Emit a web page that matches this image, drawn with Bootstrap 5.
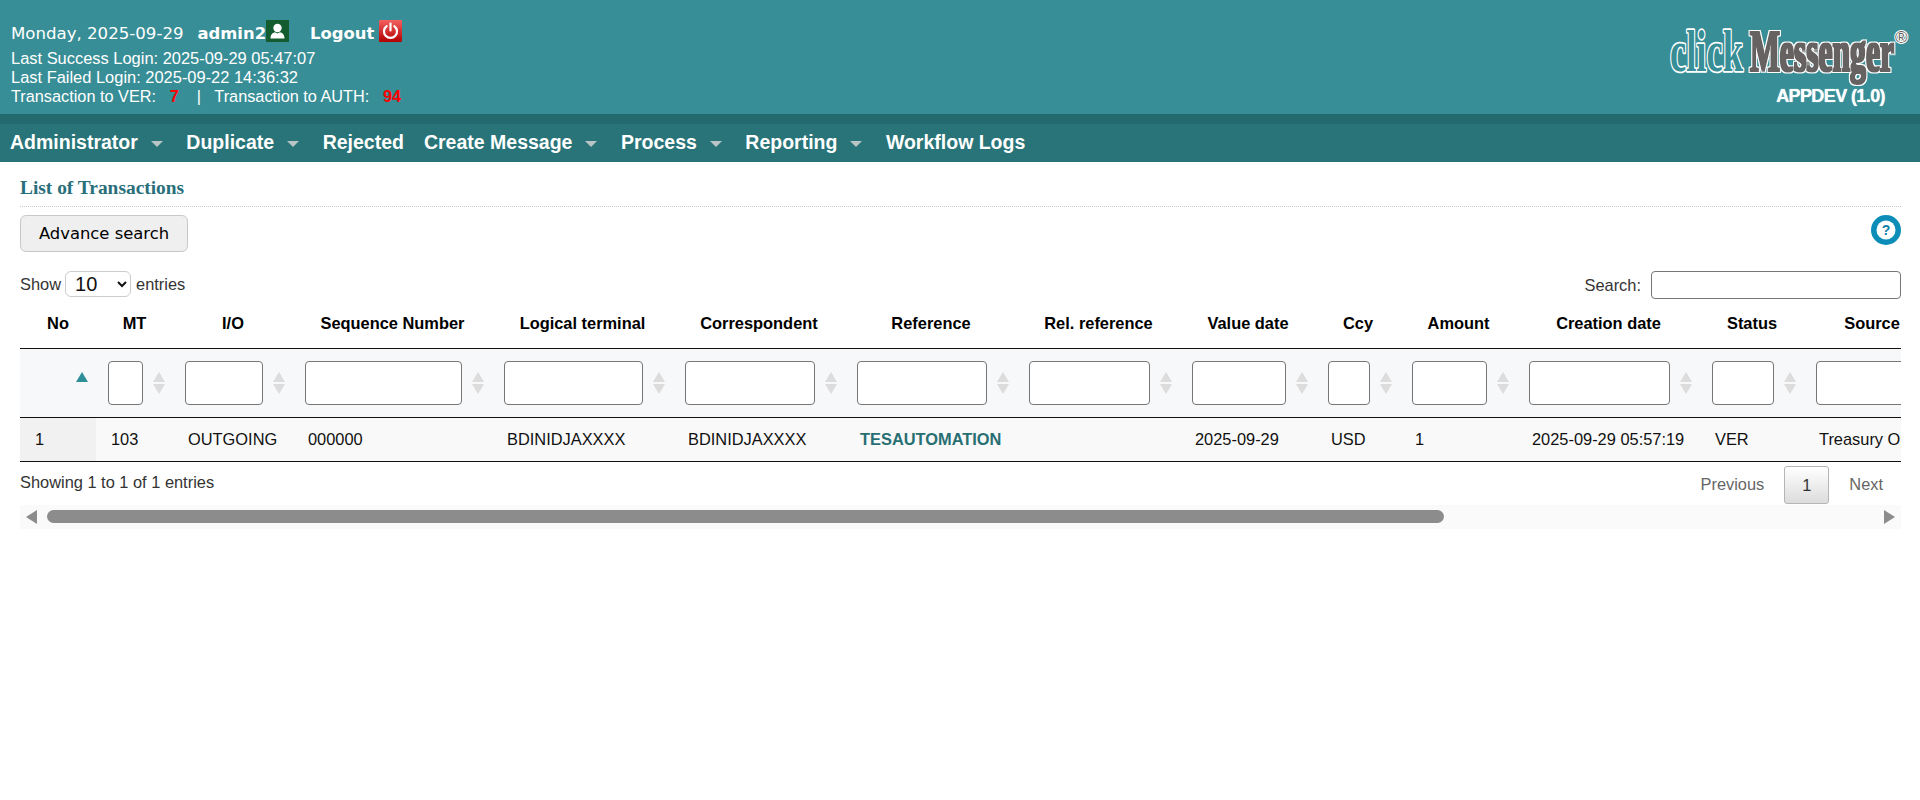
<!DOCTYPE html>
<html lang="en">
<head>
    <meta charset="UTF-8">
    <meta name="viewport" content="width=device-width, initial-scale=1.0">
    <title>clickMessenger - List of Transactions</title>
    <link href="https://cdn.jsdelivr.net/npm/bootstrap@5.3.0/dist/css/bootstrap.min.css" rel="stylesheet">
    <style>
        body { font-family: "Liberation Sans", Arial, sans-serif; font-size: 16.4px; color: #333; background: #fff; }

        /* header */
        .top-head { height: 114px; background: #388e96; color: #fff; padding: 20px 10px 0 11px; }
        .top-user { height: 22px; font-family: "DejaVu Sans", sans-serif; font-size: 16.6px; line-height: 26px; margin-bottom: 7px; }
        .top-user span, .top-user b { padding-top: 5px; }
        .top-user b { font-size: 16.4px; }
        .top-date { margin-right: 14px; }
        .top-user .top-logout { margin-left: 21px; margin-right: 5px; }
        .top-icon { width: 23px; height: 22px; display: block; }
        .top-info { font-size: 16.45px; line-height: 19px; }
        .top-count-row { font-size: 16.3px; }
        .top-count { color: #f00; font-weight: 700; }
        .logo-wrap { width: 250px; }
        .logo-svg { display: block; width: 250px; height: 66px; margin-top: 4px; }
        .logo-env { font-size: 18px; font-weight: 700; letter-spacing: -.6px; line-height: 20px; text-align: right; padding-right: 25px; margin-top: -4px; text-shadow: 0 0 1px #dff; }

        /* menu */
        .menu-stripe { height: 10px; background: #236a6e; }
        .menu-bar { height: 38px; background: #287478; padding-left: 10px; }
        .menu-item { color: #fff; font-size: 19.5px; font-weight: 700; text-decoration: none; line-height: 34px; padding-bottom: 2px; white-space: nowrap; }
        .menu-caret { width: 0; height: 0; border-left: 6px solid transparent; border-right: 6px solid transparent; border-top: 6px solid #b9c4c6; margin-left: 13px; margin-right: 3.5px; margin-top: 2px; }
        .menu-gap { width: 20px; }

        /* page */
        .page-body { padding: 0 19px 0 20px; }
        .page-title { font-family: "Liberation Serif", serif; font-size: 19.4px; font-weight: 700; color: #286f7b; margin: 0; height: 45px; line-height: 51px; border-bottom: 1px dotted #ccc; }
        .tool-row { padding-top: 8px; height: 64px; }
        .adv-btn { width: 168px; height: 37px; padding: 2px 0 0; background: #efefef; border: 1px solid #c8c8c8; border-radius: 6px; font-family: "DejaVu Sans", sans-serif; font-size: 16.4px; color: #000; }
        .help-icon { width: 30px; height: 30px; display: block; }
        .dt-top { height: 28px; margin-bottom: 0; }
        .dt-select { width: 66px; height: 26px; margin: 0 5px 0 4px; padding: 0 0 0 5px; font-size: 20px; line-height: 24px; color: #111; background: #fff; border: 1px solid #ccc; border-radius: 6px; font-family: "Liberation Sans", sans-serif; }
        .dt-search { width: 250px; height: 28px; margin-left: 10px; border: 1px solid #767676; border-radius: 4px; background: #fff; }

        /* table */
        .dt-wrap { overflow: hidden; }
        .dt-table { table-layout: fixed; width: 1920px; margin: 0; border-collapse: collapse; color: #000; }
        .dt-table thead tr.head-row th { height: 49px; font-size: 16.4px; font-weight: 700; text-align: center; vertical-align: middle; padding: 0; border: 0; border-bottom: 1px solid #111; background: #fff; white-space: nowrap; }
        .dt-table thead tr.filter-row th { height: 69px; padding: 12px 8px 12px 12px; border: 0; border-bottom: 1px solid #111; background: #f7f8fa; }
        .filter-input { flex: 1 1 auto; width: 10px; min-width: 0; height: 44px; padding: 0 4px; border: 1px solid #767676; border-radius: 4px; background: #fff; }
        .sort-icon { flex: none; width: 12px; height: 22px; margin-left: 10px; display: block; }
        .dt-table tbody td { height: 44px; padding: 0 0 0 15px; font-size: 16.4px; color: #111; vertical-align: middle; background: #f9f9f9; border: 0; border-bottom: 1px solid #111; white-space: nowrap; }
        .dt-table tbody td.no-cell { background: #f1f1f1; }
        .ref-link { color: #286f73; font-weight: 700; text-decoration: none; }

        /* footer */
        .dt-foot { height: 43px; }
        .dt-pager { padding-top: 4px; margin-right: 18px; }
        .pager-link { color: #666; text-decoration: none; line-height: 37px; }
        .pager-cur { width: 45px; height: 38px; margin: 0 20px; text-align: center; color: #333; line-height: 36px; border: 1px solid #b5b5b5; border-radius: 3px; background: linear-gradient(#fff, #dcdcdc); }
        .fake-scroll { height: 24px; background: #fafafa; padding: 0 6px; }
        .fake-scroll svg { width: 11px; height: 14px; flex: none; }
        .fake-track { flex: 1 1 auto; padding: 0 10px; }
        .fake-thumb { width: 1397px; height: 13px; border-radius: 7px; background: #8c8c8c; }
    </style>
</head>
<body>
    <!-- Header -->
    <div class="top-head d-flex justify-content-between">
        <div>
            <div class="top-user d-flex align-items-center">
                <span class="top-date">Monday, 2025-09-29</span>
                <b>admin2</b>
                <svg class="top-icon" viewBox="0 0 23 22"><rect width="23" height="22" fill="#125c30"/><circle cx="11.500" cy="8" r="4.200" fill="#fff"/><path d="M4.500 18.500c0-4.500 3-6 4.500-6.200l2.500 1.200 2.500-1.200c1.500.2 4.500 1.700 4.500 6.200z" fill="#fff"/></svg>
                <b class="top-logout">Logout</b>
                <svg class="top-icon" viewBox="0 0 23 22"><defs><linearGradient id="pw" x1="0" y1="0" x2="0" y2="1"><stop offset="0" stop-color="#f46060"/><stop offset="1" stop-color="#b30000"/></linearGradient></defs><rect width="23" height="22" rx="1" fill="url(#pw)"/><path d="M7.700 6.200a6.500 6.500 0 1 0 7.600 0" fill="none" stroke="#fff" stroke-width="2.200" stroke-linecap="round"/><path d="M11.500 3.500v7" stroke="#fff" stroke-width="2.200" stroke-linecap="round"/></svg>
            </div>
            <div class="top-info">Last Success Login: 2025-09-29 05:47:07</div>
            <div class="top-info">Last Failed Login: 2025-09-22 14:36:32</div>
            <div class="top-info top-count-row">Transaction to VER: &nbsp; <span class="top-count">7</span> &nbsp;&nbsp; | &nbsp; Transaction to AUTH: &nbsp; <span class="top-count">94</span></div>
        </div>
        <div class="logo-wrap">
            <svg class="logo-svg" viewBox="0 0 250 66">
                <defs>
                    <filter id="fatText" x="-5%" y="-10%" width="110%" height="120%">
                        <feMorphology in="SourceGraphic" operator="dilate" radius="0.6" result="fat"/>
                        <feMorphology in="SourceAlpha" operator="dilate" radius="2.200" result="halo"/>
                        <feFlood flood-color="#fff"/>
                        <feComposite in2="halo" operator="in" result="white"/>
                        <feMerge><feMergeNode in="white"/><feMergeNode in="fat"/></feMerge>
                    </filter>
                </defs>
                <g font-family="'Liberation Serif', serif" font-weight="700" font-size="60">
                    <text x="10" y="47" textLength="73" lengthAdjust="spacingAndGlyphs" fill="#388e96" stroke="#fff" stroke-width="3.600" paint-order="stroke" stroke-linejoin="round">click</text>
                    <text x="90" y="47" textLength="144" lengthAdjust="spacingAndGlyphs" fill="#666262" filter="url(#fatText)">Messenger</text>
                </g>
                <text x="235" y="19" font-family="'Liberation Sans', sans-serif" font-size="17" fill="#666262" stroke="#fff" stroke-width="2" paint-order="stroke">®</text>
            </svg>
            <div class="logo-env">APPDEV (1.0)</div>
        </div>
    </div>

    <!-- Menu -->
    <div class="menu-stripe"></div>
    <nav class="menu-bar d-flex align-items-center">
        <a class="menu-item" href="#">Administrator</a><span class="menu-caret"></span><span class="menu-gap"></span>
        <a class="menu-item" href="#">Duplicate</a><span class="menu-caret"></span><span class="menu-gap"></span>
        <a class="menu-item" href="#">Rejected</a><span class="menu-gap"></span>
        <a class="menu-item" href="#">Create Message</a><span class="menu-caret"></span><span class="menu-gap"></span>
        <a class="menu-item" href="#">Process</a><span class="menu-caret"></span><span class="menu-gap"></span>
        <a class="menu-item" href="#">Reporting</a><span class="menu-caret"></span><span class="menu-gap"></span>
        <a class="menu-item" href="#">Workflow Logs</a>
    </nav>

    <div class="page-body">
        <h1 class="page-title">List of Transactions</h1>

        <div class="tool-row d-flex justify-content-between align-items-start">
            <button type="button" class="adv-btn">Advance search</button>
            <svg class="help-icon" viewBox="0 0 30 30"><circle cx="15" cy="15" r="15" fill="#0b8db8"/><circle cx="15" cy="15" r="9.500" fill="#fff"/><text x="15" y="20" text-anchor="middle" font-family="'Liberation Sans', sans-serif" font-size="14" font-weight="700" fill="#0b7fa8">?</text></svg>
        </div>

        <div class="dt-top d-flex justify-content-between align-items-start">
            <label class="d-flex align-items-center">Show
                <select class="dt-select"><option>10</option><option>25</option><option>50</option></select>
                entries</label>
            <label class="d-flex align-items-center">Search:<input type="search" class="dt-search"></label>
        </div>

        <div class="dt-wrap">
            <table class="dt-table" id="txTable">
                <colgroup id="txCols"></colgroup>
                <thead>
                    <tr class="head-row" id="txHead"></tr>
                    <tr class="filter-row" id="txFilter"></tr>
                </thead>
                <tbody>
                    <tr>
                        <td class="no-cell">1</td>
                        <td>103</td>
                        <td>OUTGOING</td>
                        <td>000000</td>
                        <td>BDINIDJAXXXX</td>
                        <td>BDINIDJAXXXX</td>
                        <td><a class="ref-link" href="#">TESAUTOMATION</a></td>
                        <td></td>
                        <td>2025-09-29</td>
                        <td>USD</td>
                        <td>1</td>
                        <td>2025-09-29 05:57:19</td>
                        <td>VER</td>
                        <td>Treasury Operation</td>
                    </tr>
                </tbody>
            </table>
        </div>

        <div class="dt-foot d-flex justify-content-between">
            <div class="pt-2">Showing 1 to 1 of 1 entries</div>
            <div class="dt-pager d-flex align-items-start">
                <a class="pager-link" href="#">Previous</a>
                <div class="pager-cur">1</div>
                <a class="pager-link" href="#">Next</a>
            </div>
        </div>

        <div class="fake-scroll d-flex align-items-center">
            <svg viewBox="0 0 11 14"><path d="M11 0v14L0 7z" fill="#8c8c8c"/></svg>
            <div class="fake-track"><div class="fake-thumb"></div></div>
            <svg viewBox="0 0 11 14"><path d="M0 0v14l11-7z" fill="#8c8c8c"/></svg>
        </div>
    </div>

    <script src="https://cdn.jsdelivr.net/npm/bootstrap@5.3.0/dist/js/bootstrap.bundle.min.js"></script>
    <script>
        // column titles and widths read off the reference
        const columns = [
            ['No', 76], ['MT', 77], ['I/O', 120], ['Sequence Number', 199], ['Logical terminal', 181],
            ['Correspondent', 172], ['Reference', 172], ['Rel. reference', 163], ['Value date', 136],
            ['Ccy', 84], ['Amount', 117], ['Creation date', 183], ['Status', 104], ['Source', 136]
        ];
        const sortIcon = (up, down) => `<svg class="sort-icon" viewBox="0 0 12 22"><path d="M6 0l6 10H0z" fill="${up}"/><path d="M6 22l6-10H0z" fill="${down}"/></svg>`;

        columns.forEach(([title, width], i) => {
            const col = document.createElement('col');
            col.style.width = width + 'px';
            document.getElementById('txCols').appendChild(col);

            const th = document.createElement('th');
            th.textContent = title;
            document.getElementById('txHead').appendChild(th);

            const filter = document.createElement('th');
            filter.innerHTML = i === 0
                ? `<div class="d-flex justify-content-end">${sortIcon('#2f8f99', 'transparent')}</div>`
                : `<div class="d-flex align-items-center"><input type="text" class="filter-input">${sortIcon('#dcdcdc', '#dcdcdc')}</div>`;
            document.getElementById('txFilter').appendChild(filter);
        });
    </script>
</body>
</html>
